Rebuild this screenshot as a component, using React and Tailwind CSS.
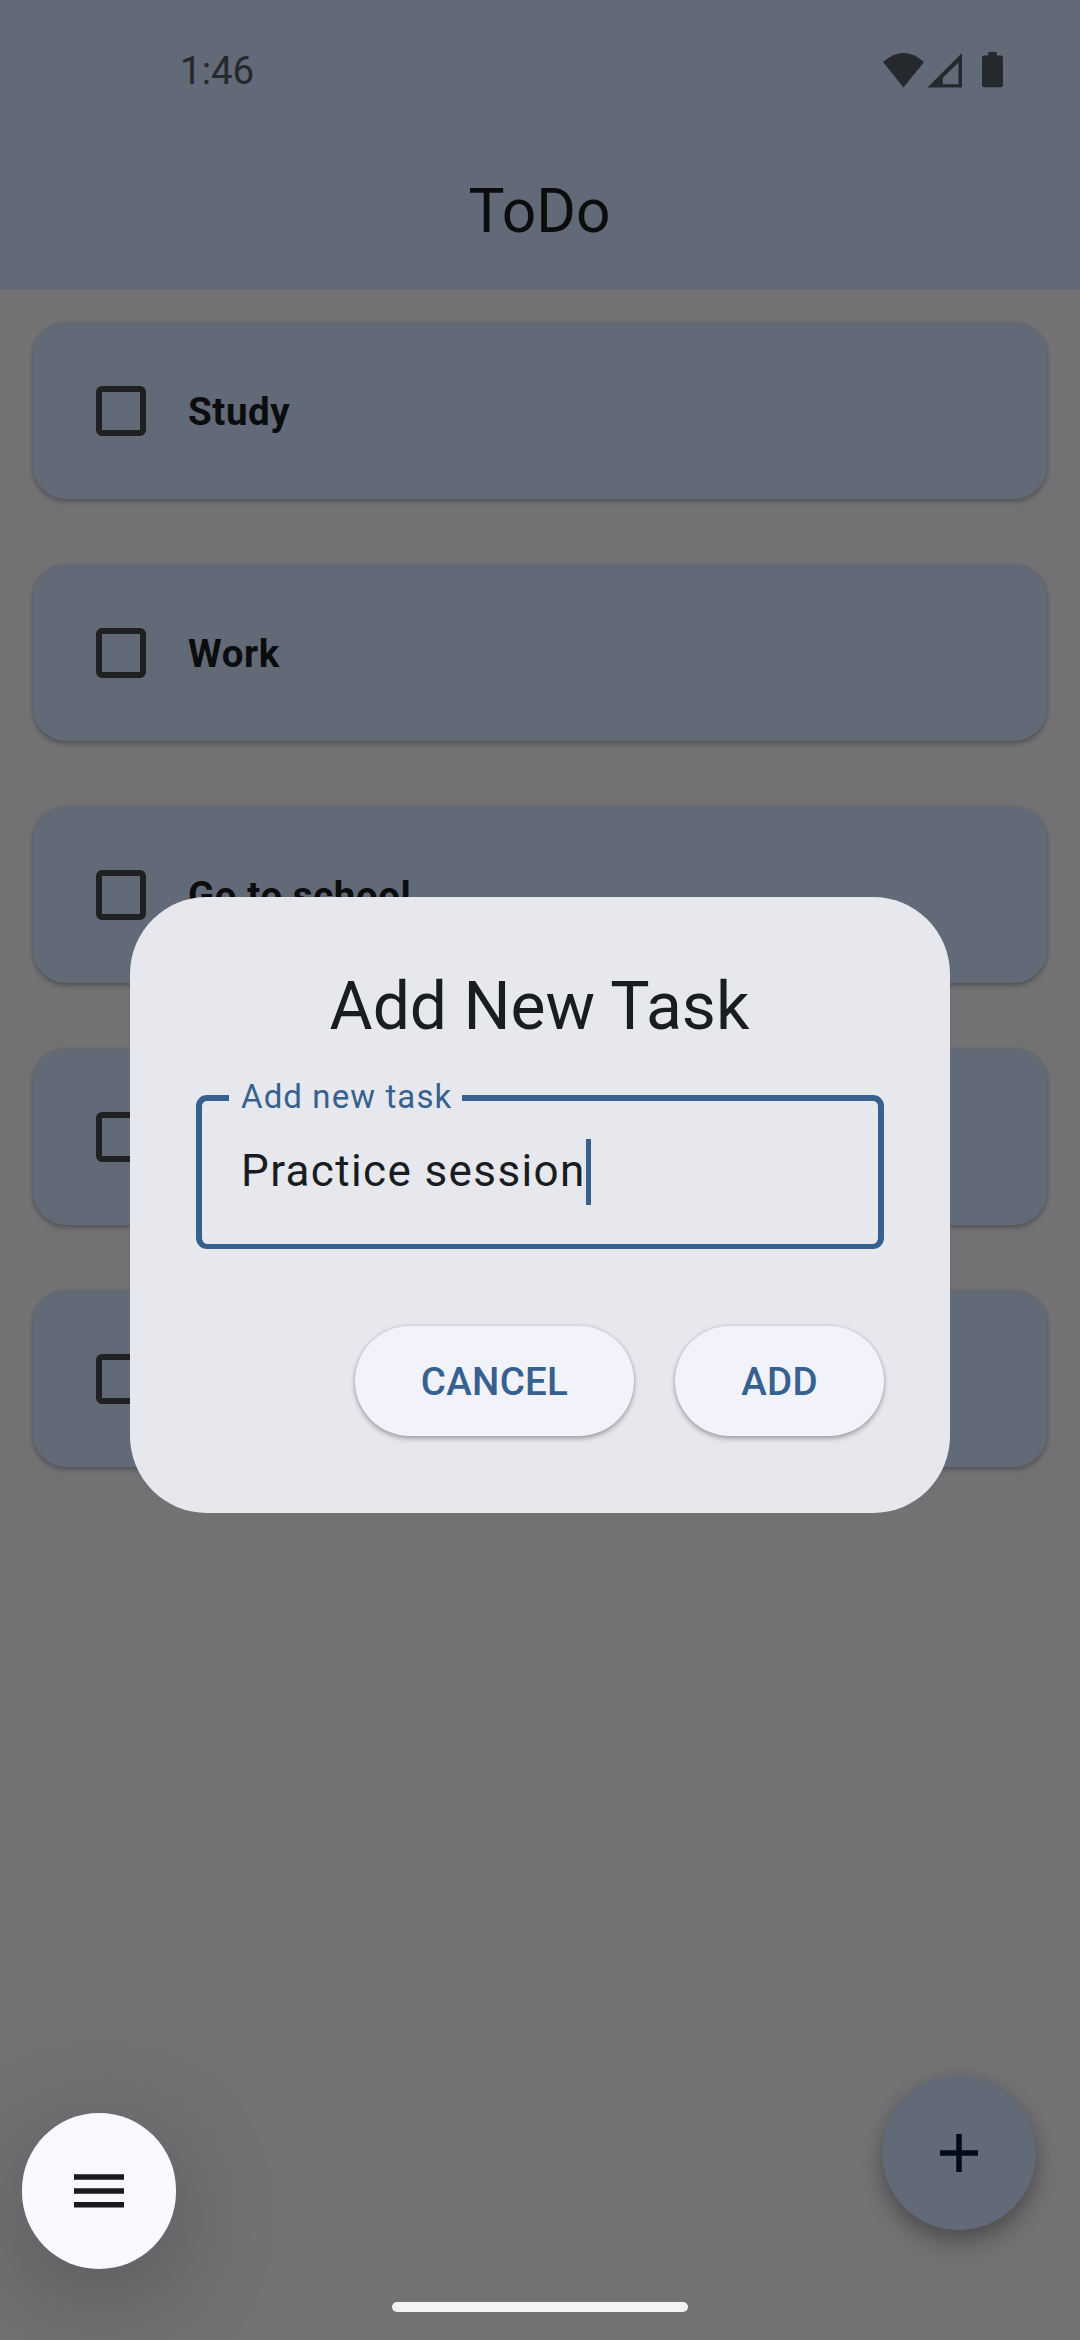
const tasks = ["Study", "Work", "Go to school", "", ""];

function StatusBar() {
  return (
    <div className="flex h-[140px] items-center justify-between pl-[180px] pr-[76px] text-[#25282c]">
      <span className="pt-[2px] text-[38.5px] leading-[46px]">1:46</span>
      <svg width="122" height="36" viewBox="0 0 122 36" fill="currentColor">
        <path d="M1 10 Q21.500 -8 42 10 L21.500 35.500 Z" />
        <path fillRule="evenodd" d="M80 1 V35.500 H45.500 Z M76.500 10.500 L60.800 25.800 V32.200 H76.500 Z" />
        <path d="M106.200 0 h8.500 v3.500 h4.200 a2 2 0 0 1 2 2 V33.200 a2 2 0 0 1 -2 2 H102 a2 2 0 0 1 -2 -2 V5.500 a2 2 0 0 1 2 -2 h4.200 Z" />
      </svg>
    </div>
  );
}

function TaskCard({ label }) {
  return (
    <li className="flex h-[176px] items-center gap-[42px] rounded-[33px] bg-[#626977] pl-[63px] shadow-[0_3px_5px_rgba(0,0,0,0.22),0_0_4px_rgba(0,0,0,0.12)]">
      <span className="size-[50px] rounded-[6px] border-[6px] border-[#1f2022]" />
      <span className="pt-[2px] text-[38.5px] leading-[46px] font-bold tracking-[0.58px] text-[#0b0c0e]">{label}</span>
    </li>
  );
}

function DialogButton({ children, className }) {
  return (
    <button
      className={
        "flex h-[110px] items-center justify-center rounded-full bg-[#f1f2fa] pt-[2px] text-[38.5px] leading-[46px] font-medium tracking-[0.27px] text-[#36618e] shadow-[0_3px_5px_rgba(0,0,0,0.26),0_0_4px_rgba(0,0,0,0.14)] " +
        className
      }
    >
      {children}
    </button>
  );
}

function AddTaskDialog() {
  return (
    <div className="absolute inset-x-0 top-[897px] flex justify-center">
      <section className="flex h-[616px] w-[820px] flex-col rounded-[77px] bg-[#e6e8ed] px-[66px] pt-[66px]">
        <h2 className="pr-[1px] text-center text-[66px] leading-[88px] text-[#191c20]">Add New Task</h2>
        <div className="relative mt-[44px] flex h-[154px] items-center rounded-[11px] border-[6px] border-b-[5px] border-[#36618e] pb-[1px] pl-[39px]">
          <span className="absolute top-[-26px] left-[27px] w-[233px] bg-[#e6e8ed] pl-[12px] text-[33px] leading-[44px] tracking-[1.1px] whitespace-nowrap text-[#36618e]">
            Add new task
          </span>
          <span className="pb-[2px] text-[44px] leading-[66px] tracking-[1.375px] text-[#191c20]">Practice session</span>
          <span className="h-[66px] w-[5px] bg-[#36618e]" />
        </div>
        <div className="mt-[77px] flex justify-end gap-[41px]">
          <DialogButton className="w-[279px]">CANCEL</DialogButton>
          <DialogButton className="w-[209px]">ADD</DialogButton>
        </div>
      </section>
    </div>
  );
}

export default function App() {
  return (
    <main className="relative h-[2340px] w-[1080px] overflow-hidden bg-[#727274] font-['Roboto',sans-serif]">
      <header className="h-[290px] bg-[#626977]">
        <StatusBar />
        <h1 className="pr-[1px] text-center text-[60.5px] leading-[144px] text-[#0b0c0e]">ToDo</h1>
      </header>
      <ul className="flex flex-col gap-[66px] px-[33px] pt-[33px]">
        {tasks.map((label, i) => (
          <TaskCard key={i} label={label} />
        ))}
      </ul>

      <AddTaskDialog />

      <button className="absolute top-[2076px] left-[882px] flex size-[154px] items-center justify-center rounded-full bg-[#626977] shadow-[0_14px_22px_rgba(0,0,0,0.24),0_2px_16px_rgba(0,0,0,0.12)]">
        <svg width="38" height="38" viewBox="0 0 38 38" fill="#020c18">
          <path d="M16.250 0h5.500v16.250H38v5.500H21.750V38h-5.500V21.750H0v-5.500h16.250z" />
        </svg>
      </button>
      <button className="absolute top-[2113px] left-[22px] flex h-[156px] w-[154px] items-center justify-center rounded-full bg-[#f9f9ff] shadow-[0_26px_110px_rgba(0,0,0,0.24)]">
        <svg width="50" height="34" viewBox="0 0 50 34" fill="#191a20">
          <path d="M0 0.300h50v5.500H0zM0 14.200h50v5.500H0zM0 28.100h50v5.500H0z" />
        </svg>
      </button>
      <div className="absolute top-[2302px] left-[392px] h-[10px] w-[296px] rounded-full bg-[#f3f3f3]" />
    </main>
  );
}
